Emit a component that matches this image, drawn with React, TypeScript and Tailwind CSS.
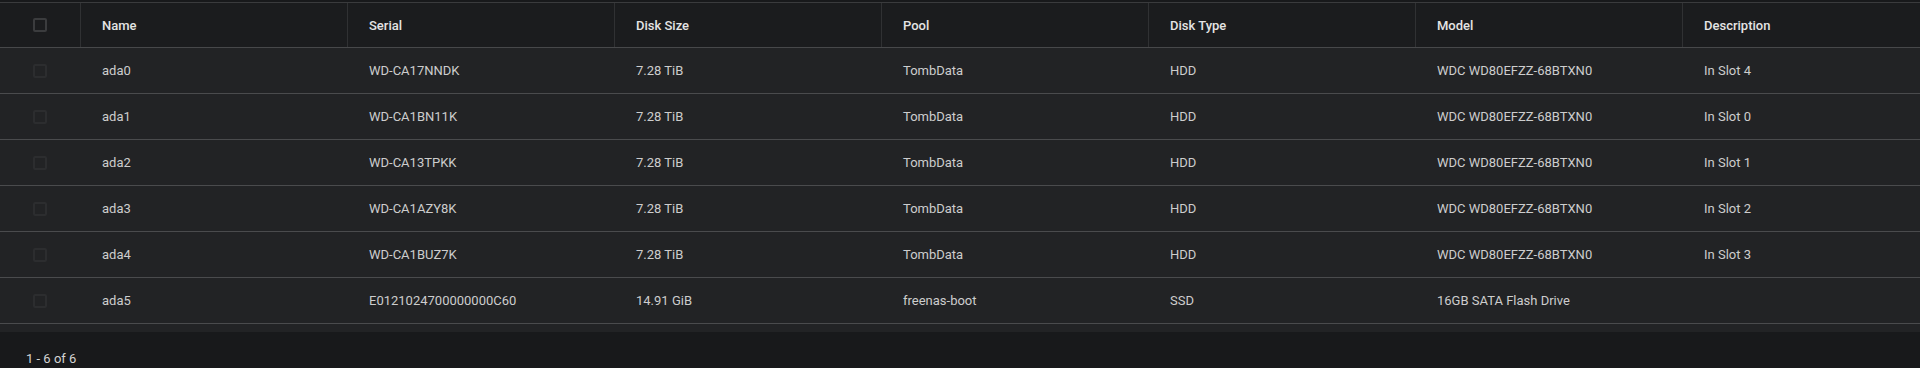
import React from "react";

type Disk = {
    name: string;
    serial: string;
    size: string;
    pool: string;
    type: string;
    model: string;
    description: string;
};

const columns = ["Name", "Serial", "Disk Size", "Pool", "Disk Type", "Model", "Description"];

const disks: Disk[] = [
    { name: "ada0", serial: "WD-CA17NNDK", size: "7.28 TiB", pool: "TombData", type: "HDD", model: "WDC WD80EFZZ-68BTXN0", description: "In Slot 4" },
    { name: "ada1", serial: "WD-CA1BN11K", size: "7.28 TiB", pool: "TombData", type: "HDD", model: "WDC WD80EFZZ-68BTXN0", description: "In Slot 0" },
    { name: "ada2", serial: "WD-CA13TPKK", size: "7.28 TiB", pool: "TombData", type: "HDD", model: "WDC WD80EFZZ-68BTXN0", description: "In Slot 1" },
    { name: "ada3", serial: "WD-CA1AZY8K", size: "7.28 TiB", pool: "TombData", type: "HDD", model: "WDC WD80EFZZ-68BTXN0", description: "In Slot 2" },
    { name: "ada4", serial: "WD-CA1BUZ7K", size: "7.28 TiB", pool: "TombData", type: "HDD", model: "WDC WD80EFZZ-68BTXN0", description: "In Slot 3" },
    { name: "ada5", serial: "E0121024700000000C60", size: "14.91 GiB", pool: "freenas-boot", type: "SSD", model: "16GB SATA Flash Drive", description: "" },
];

const gridCols = "grid grid-cols-[80px_repeat(7,267px)]";

// Caixa de seleção vazia (cabeçalho e linhas)
function Checkbox({ faint }: { faint?: boolean }) {
    return (
        <div className="flex items-center justify-center h-full pr-[1px]">
            <div className={`w-[14px] h-[14px] rounded-[2px] border-2 ${faint ? "border-[#2c2d2f]" : "border-[#3b3c3e]"}`} />
        </div>
    );
}

export default function App() {
    return (
        <div className="w-full h-[368px] bg-[#18191b] overflow-hidden font-['Roboto',sans-serif]">
            <div className="h-[2px]" />
            <div className="border-t border-[#3a3b3d]">
                {/* Cabeçalho da tabela */}
                <div className={`${gridCols} h-[45px] bg-[#1b1c1e] border-b border-[#47484a]`}>
                    <Checkbox />
                    {columns.map(( col ) => (
                        <div key={col} className="flex items-center pl-[21px] pt-[1px] border-l border-[#303133] text-[13px] font-medium text-[#e4e4e4]">
                            {col}
                        </div>
                    ))}
                </div>

                {/* Linhas com os discos */}
                { disks.map(( disk ) => (
                    <div key={disk.name} className={`${gridCols} h-[46px] bg-[#222325] border-b border-[#4a4b4d]`}>
                        <Checkbox faint />
                        {[disk.name, disk.serial, disk.size, disk.pool, disk.type, disk.model, disk.description].map(( value, i ) => (
                            <div key={i} className="flex items-center pl-[22px] text-[13px] text-[#cdcdcd]">
                                {value}
                            </div>
                        ))}
                    </div>
                ))}
                <div className="h-[8px] bg-[#222325]" />
            </div>

            {/* Rodapé com a contagem */}
            <div className="pl-[26px] pt-[17px] text-[13px] text-[#d4d4d4]">1 - 6 of 6</div>
        </div>
    );
}
